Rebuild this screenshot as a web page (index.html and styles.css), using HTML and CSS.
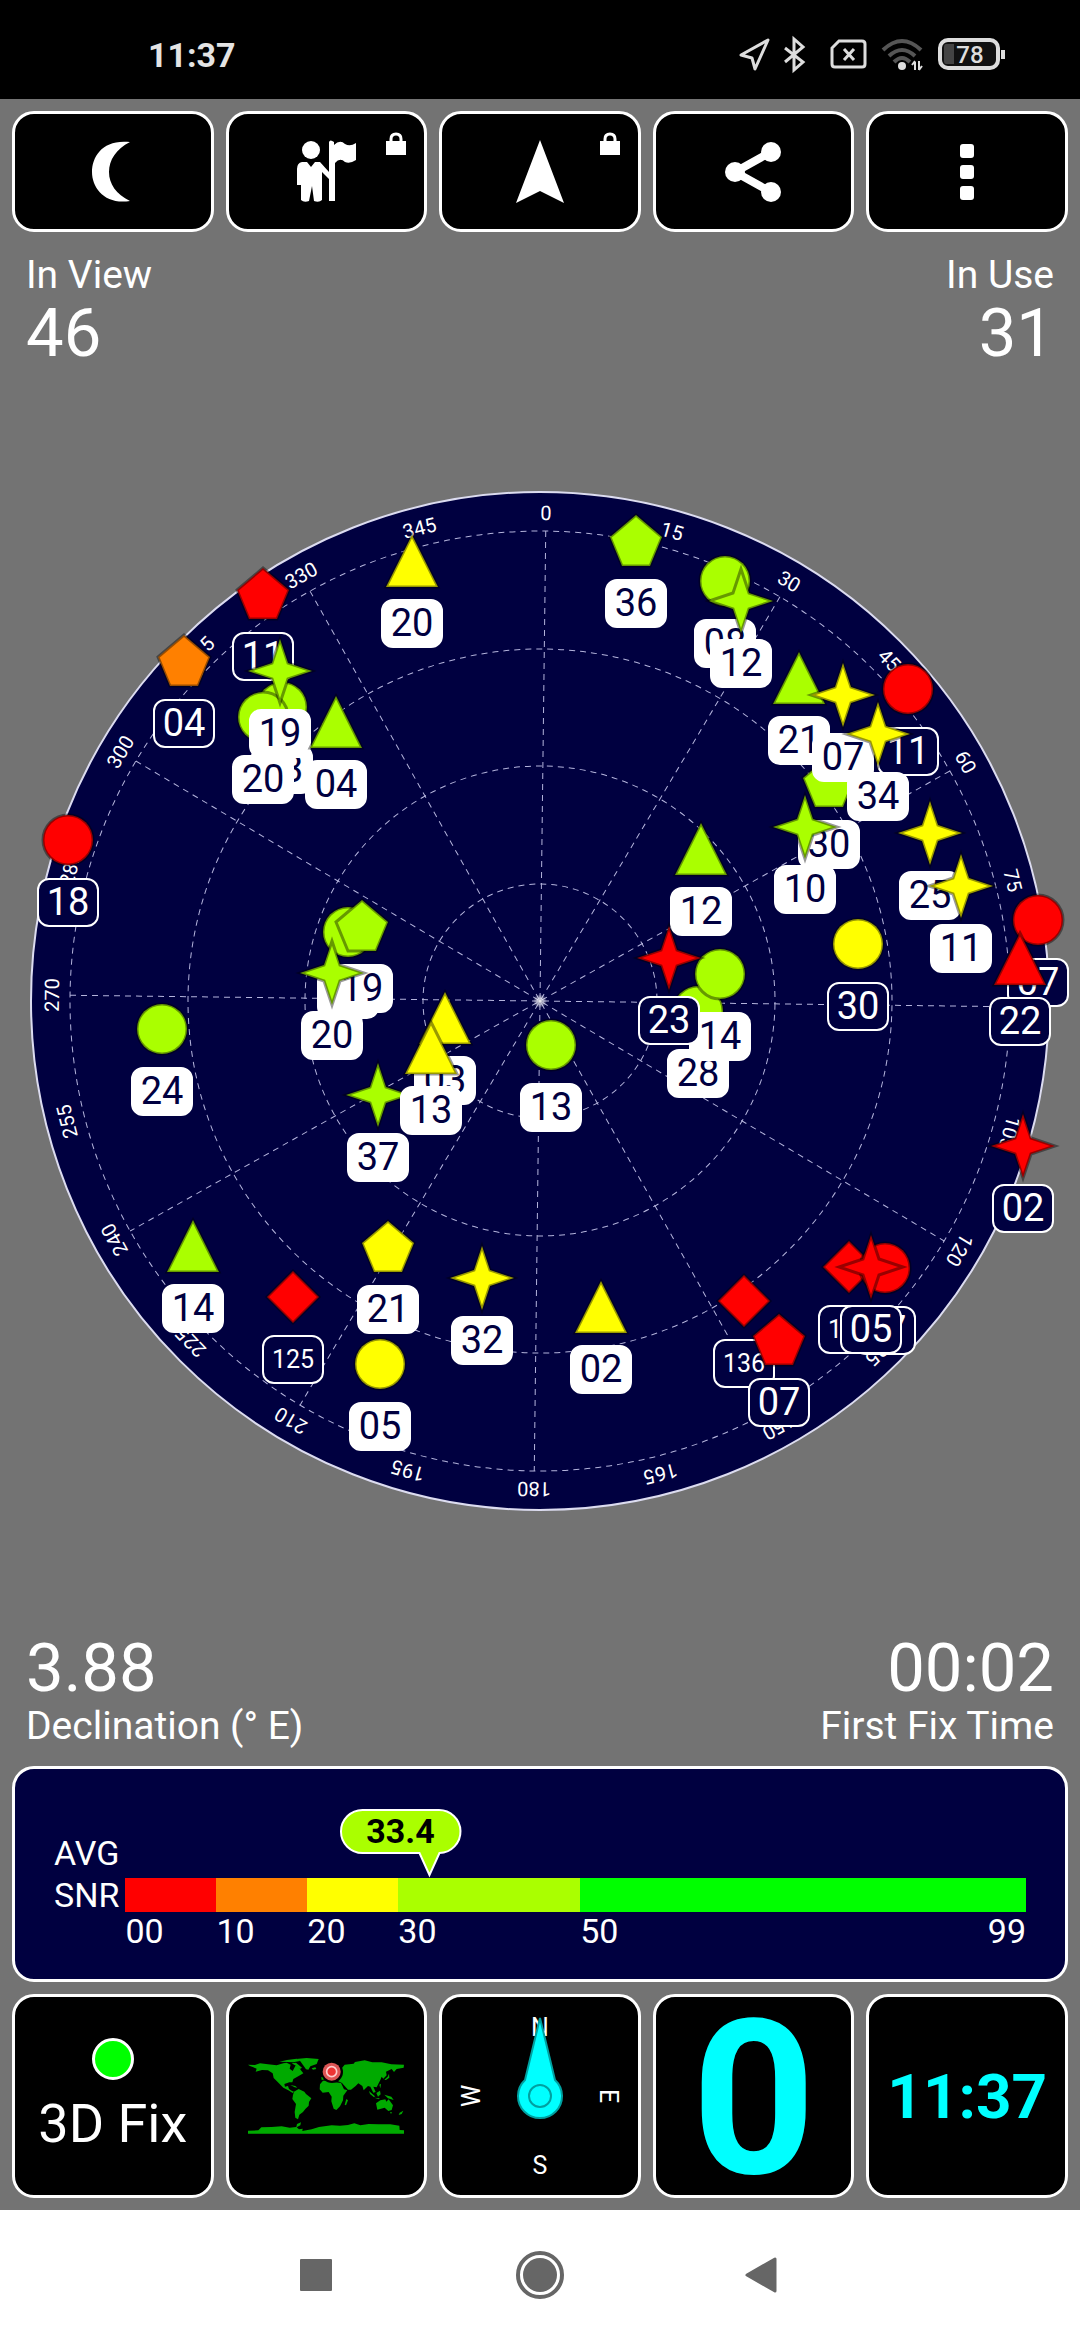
FILE: index.html
```html
<!DOCTYPE html>
<html lang="en">
<head>
  <meta charset="utf-8">
  <meta name="viewport" content="width=device-width, initial-scale=1">
  <title>GPS Sky View</title>
  <link rel="stylesheet" href="styles.css">
</head>
<body>
  <!-- Status bar -->
  <header class="status-bar">
    <span class="status-time">11:37</span>
    <svg class="status-icons" viewBox="0 0 270 40" role="img" aria-label="Location, bluetooth, no SIM, wifi, battery">
      <path d="M3 20 30 5 17 34 14 23Z" fill="none" stroke="#ddd" stroke-width="3" stroke-linejoin="round"/>
      <path d="M47 13 65 27 56 35V4L65 12 47 27" fill="none" stroke="#ddd" stroke-width="3"/>
      <path d="M101 6H124Q127 6 127 9V29Q127 32 124 32H97Q94 32 94 29V13Z" fill="none" stroke="#ddd" stroke-width="3"/>
      <path d="M106 14 116 25M116 14 106 25" stroke="#ddd" stroke-width="3"/>
      <g fill="none" stroke="#555" stroke-width="4">
        <path d="M145 15Q164 -3 183 15"/>
        <path d="M151 21Q164 9 177 21"/>
        <path d="M156 27Q164 19 172 27"/>
      </g>
      <circle cx="164" cy="31" r="4" fill="#ddd"/>
      <path d="M177 27V35M174 30 177 26M181 26V35M184 31 181 35" stroke="#ddd" stroke-width="2"/>
      <rect x="202" y="5" width="58" height="28" rx="8" fill="#111" stroke="#ddd" stroke-width="4"/>
      <path d="M208 9H216V29H208Q206 29 206 26V12Q206 9 208 9Z" fill="#444"/>
      <path d="M265 15V24" stroke="#ddd" stroke-width="4"/>
      <text class="battery-text" x="232" y="28">78</text>
    </svg>
  </header>

  <main class="app">
    <!-- Toolbar -->
    <nav class="tiles toolbar">
      <button class="tile" aria-label="Night mode">
        <svg width="64" height="64" viewBox="0 0 64 64"><path d="M49 2C22 -1 11 16 11 32S24 65 49 61C35 54 28 44 28 32S35 9 49 2Z"/></svg>
      </button>
      <button class="tile" aria-label="Guide">
        <svg width="64" height="64" viewBox="0 0 64 64">
          <circle cx="17" cy="10" r="9"/>
          <path d="M8 22H13L17 27 21 22H26L35 32V2Q36 -1 40 2V5Q46 -1 51 4 56 7 62 3V20Q56 24 51 22 46 17 41 23V61H35V39L28 32V60Q25 63 20 61L18 46 15 61Q10 63 7 60V45H3V29Q3 23 8 22Z"/>
        </svg>
        <svg class="lock" width="20" height="24" viewBox="0 0 20 24"><path d="M0 9H20V23H0Z"/><path d="M5 10V7Q5 2 10 2T15 7V10" fill="none" stroke="#fff" stroke-width="3"/></svg>
      </button>
      <button class="tile" aria-label="Navigation">
        <svg width="64" height="64" viewBox="0 0 64 64"><path d="M32 0 56 63 32 51 8 63Z"/></svg>
        <svg class="lock" width="20" height="24" viewBox="0 0 20 24"><path d="M0 9H20V23H0Z"/><path d="M5 10V7Q5 2 10 2T15 7V10" fill="none" stroke="#fff" stroke-width="3"/></svg>
      </button>
      <button class="tile" aria-label="Share">
        <svg width="64" height="64" viewBox="0 0 64 64"><path d="M49 12 13 32 49 52" fill="none" stroke="#fff" stroke-width="8"/><circle cx="13" cy="32" r="10"/><circle cx="49" cy="12" r="10"/><circle cx="49" cy="52" r="10"/></svg>
      </button>
      <button class="tile" aria-label="More">
        <svg width="64" height="64" viewBox="0 0 64 64"><rect x="25" y="4" width="14" height="14" rx="3"/><rect x="25" y="25" width="14" height="14" rx="3"/><rect x="25" y="46" width="14" height="14" rx="3"/></svg>
      </button>
    </nav>

    <section class="sky">
      <div class="readouts">
        <div class="readout">
          <span class="label">In View</span>
          <span class="value">46</span>
        </div>
        <div class="readout right">
          <span class="label">In Use</span>
          <span class="value">31</span>
        </div>
      </div>

      <!-- Sky plot -->
      <svg class="sky-plot" viewBox="0 0 1080 1080" role="img" aria-label="Satellite positions">
        <defs>
          <circle id="circle" r="25"/>
          <path id="triangle" d="M0 -26 26 26H-26Z"/>
          <path id="pentagon" d="M0 -26 26 -4 14 25H-14L-26 -4Z"/>
          <path id="star" d="M0 -32 8 -8 32 0 8 8 0 32 -8 8 -32 0 -8 -8Z"/>
          <path id="diamond" d="M0 -26 26 0 0 26 -26 0Z"/>
          <rect id="tag" x="-30" y="39" width="60" height="47" rx="11"/>
          <radialGradient id="zenith"><stop offset="0" stop-color="#fff"/><stop offset="1" stop-color="#fff" stop-opacity="0"/></radialGradient>
        </defs>

        <circle class="horizon" cx="540" cy="540" r="509"/>
        <g transform="translate(540 540) rotate(0.7)">
          <g class="grid-lines">
            <circle r="470"/>
            <circle r="352"/>
            <circle r="235"/>
            <circle r="117"/>
            <path d="M0 -470V470M-470 0H470"/>
            <path d="M0 -470V470M-470 0H470" transform="rotate(30)"/>
            <path d="M0 -470V470M-470 0H470" transform="rotate(60)"/>
          </g>
          <g class="azimuth">
            <text y="-481">0</text>
            <text y="-481" transform="rotate(15)">15</text>
            <text y="-481" transform="rotate(30)">30</text>
            <text y="-481" transform="rotate(45)">45</text>
            <text y="-481" transform="rotate(60)">60</text>
            <text y="-481" transform="rotate(75)">75</text>
            <text y="-481" transform="rotate(105)">105</text>
            <text y="-481" transform="rotate(120)">120</text>
            <text y="-481" transform="rotate(135)">135</text>
            <text y="-481" transform="rotate(150)">150</text>
            <text y="-481" transform="rotate(165)">165</text>
            <text y="-481" transform="rotate(180)">180</text>
            <text y="-481" transform="rotate(195)">195</text>
            <text y="-481" transform="rotate(210)">210</text>
            <text y="-481" transform="rotate(225)">225</text>
            <text y="-481" transform="rotate(240)">240</text>
            <text y="-481" transform="rotate(255)">255</text>
            <text y="-481" transform="rotate(270)">270</text>
            <text y="-481" transform="rotate(285)">285</text>
            <text y="-481" transform="rotate(300)">300</text>
            <text y="-481" transform="rotate(315)">315</text>
            <text y="-481" transform="rotate(330)">330</text>
            <text y="-481" transform="rotate(345)">345</text>
          </g>
        </g>
        <circle cx="540" cy="540" r="7" fill="url(#zenith)"/>

        <!-- north west -->
        <g class="sat red" transform="translate(263 133)"><use href="#pentagon"/><use class="tag" href="#tag"/><text y="75">11</text></g>
        <g class="sat orange" transform="translate(184 200)"><use href="#pentagon"/><use class="tag" href="#tag"/><text y="75">04</text></g>
        <g class="sat lime used" transform="translate(282 246)"><use href="#circle"/><use class="tag" href="#tag"/><text y="75">03</text></g>
        <g class="sat lime used" transform="translate(263 256)"><use href="#circle"/><use class="tag" href="#tag"/><text y="75">20</text></g>
        <g class="sat lime used" transform="translate(280 210)"><use href="#star"/><use class="tag" href="#tag"/><text y="75">19</text></g>
        <g class="sat lime used" transform="translate(336 261)"><use href="#triangle"/><use class="tag" href="#tag"/><text y="75">04</text></g>
        <g class="sat red" transform="translate(68 379)"><use href="#circle"/><use class="tag" href="#tag"/><text y="75">18</text></g>
        <g class="sat yellow used" transform="translate(412 100)"><use href="#triangle"/><use class="tag" href="#tag"/><text y="75">20</text></g>
        <g class="sat lime used" transform="translate(348 471)"><use href="#circle"/><use class="tag" href="#tag"/></g>
        <g class="sat lime used" transform="translate(362 465)"><use href="#pentagon"/><use class="tag" href="#tag"/><text y="75">19</text></g>
        <g class="sat lime used" transform="translate(332 512)"><use href="#star"/><use class="tag" href="#tag"/><text y="75">20</text></g>

        <!-- south west -->
        <g class="sat lime used" transform="translate(162 568)"><use href="#circle"/><use class="tag" href="#tag"/><text y="75">24</text></g>
        <g class="sat lime used" transform="translate(378 634)"><use href="#star"/><use class="tag" href="#tag"/><text y="75">37</text></g>
        <g class="sat lime used" transform="translate(193 785)"><use href="#triangle"/><use class="tag" href="#tag"/><text y="75">14</text></g>
        <g class="sat red" transform="translate(293 836)"><use href="#diamond"/><use class="tag" href="#tag"/><text class="small" y="71">125</text></g>
        <g class="sat yellow used" transform="translate(388 786)"><use href="#pentagon"/><use class="tag" href="#tag"/><text y="75">21</text></g>
        <g class="sat yellow used" transform="translate(380 903)"><use href="#circle"/><use class="tag" href="#tag"/><text y="75">05</text></g>
        <g class="sat yellow used" transform="translate(482 817)"><use href="#star"/><use class="tag" href="#tag"/><text y="75">32</text></g>
        <g class="sat yellow used" transform="translate(445 557)"><use href="#triangle"/><use class="tag" href="#tag"/><text y="75">03</text></g>
        <g class="sat yellow used" transform="translate(431 587)"><use href="#triangle"/><use class="tag" href="#tag"/><text y="75">13</text></g>

        <!-- north east -->
        <g class="sat lime used" transform="translate(636 80)"><use href="#pentagon"/><use class="tag" href="#tag"/><text y="75">36</text></g>
        <g class="sat lime used" transform="translate(725 120)"><use href="#circle"/><use class="tag" href="#tag"/><text y="75">08</text></g>
        <g class="sat lime used" transform="translate(741 140)"><use href="#star"/><use class="tag" href="#tag"/><text y="75">12</text></g>
        <g class="sat lime used" transform="translate(799 217)"><use href="#triangle"/><use class="tag" href="#tag"/><text y="75">21</text></g>
        <g class="sat red" transform="translate(908 228)"><use href="#circle"/><use class="tag" href="#tag"/><text y="75">11</text></g>
        <g class="sat lime used" transform="translate(829 321)"><use href="#pentagon"/><use class="tag" href="#tag"/><text y="75">30</text></g>
        <g class="sat yellow used" transform="translate(843 234)"><use href="#star"/><use class="tag" href="#tag"/><text y="75">07</text></g>
        <g class="sat yellow used" transform="translate(878 273)"><use href="#star"/><use class="tag" href="#tag"/><text y="75">34</text></g>
        <g class="sat lime used" transform="translate(805 366)"><use href="#star"/><use class="tag" href="#tag"/><text y="75">10</text></g>
        <g class="sat yellow used" transform="translate(930 372)"><use href="#star"/><use class="tag" href="#tag"/><text y="75">25</text></g>
        <g class="sat yellow used" transform="translate(961 425)"><use href="#star"/><use class="tag" href="#tag"/><text y="75">11</text></g>
        <g class="sat lime used" transform="translate(701 388)"><use href="#triangle"/><use class="tag" href="#tag"/><text y="75">12</text></g>
        <g class="sat yellow" transform="translate(858 483)"><use href="#circle"/><use class="tag" href="#tag"/><text y="75">30</text></g>
        <g class="sat red" transform="translate(1038 459)"><use href="#circle"/><use class="tag" href="#tag"/><text y="75">07</text></g>
        <g class="sat red" transform="translate(1020 498)"><use href="#triangle"/><use class="tag" href="#tag"/><text y="75">22</text></g>

        <!-- south east -->
        <g class="sat lime used" transform="translate(698 550)"><use href="#circle"/><use class="tag" href="#tag"/><text y="75">28</text></g>
        <g class="sat lime used" transform="translate(720 513)"><use href="#circle"/><use class="tag" href="#tag"/><text y="75">14</text></g>
        <g class="sat red" transform="translate(669 497)"><use href="#star"/><use class="tag" href="#tag"/><text y="75">23</text></g>
        <g class="sat lime used" transform="translate(551 584)"><use href="#circle"/><use class="tag" href="#tag"/><text y="75">13</text></g>
        <g class="sat red" transform="translate(1023 685)"><use href="#star"/><use class="tag" href="#tag"/><text y="75">02</text></g>
        <g class="sat red" transform="translate(849 806)"><use href="#diamond"/><use class="tag" href="#tag"/><text class="small" y="71">123</text></g>
        <g class="sat red" transform="translate(885 807)"><use href="#circle"/><use class="tag" href="#tag"/><text y="75">27</text></g>
        <g class="sat red" transform="translate(871 806)"><use href="#star"/><use class="tag" href="#tag"/><text y="75">05</text></g>
        <g class="sat red" transform="translate(744 840)"><use href="#diamond"/><use class="tag" href="#tag"/><text class="small" y="71">136</text></g>
        <g class="sat red" transform="translate(779 879)"><use href="#pentagon"/><use class="tag" href="#tag"/><text y="75">07</text></g>
        <g class="sat yellow used" transform="translate(601 846)"><use href="#triangle"/><use class="tag" href="#tag"/><text y="75">02</text></g>
      </svg>

      <div class="readouts">
        <div class="readout">
          <span class="value">3.88</span>
          <span class="label">Declination (° E)</span>
        </div>
        <div class="readout right">
          <span class="value">00:02</span>
          <span class="label">First Fix Time</span>
        </div>
      </div>
    </section>

    <!-- Average signal to noise ratio -->
    <section class="snr">
      <div class="snr-name">AVG</div>
      <div class="snr-name">SNR</div>
      <div class="snr-bar">
        <span class="red"></span>
        <span class="orange"></span>
        <span class="yellow"></span>
        <span class="lime"></span>
        <span class="green"></span>
        <svg class="snr-bubble" style="left: 33.7%" width="124" height="70" viewBox="0 0 124 70">
          <path d="M24 2H100A21 21 0 0 1 101 45L91 67 81 45H24A21 21 0 0 1 24 2Z"/>
          <text x="62" y="35">33.4</text>
        </svg>
      </div>
      <div class="snr-scale">
        <span>00</span>
        <span>10</span>
        <span>20</span>
        <span>30</span>
        <span class="scale-end"><span>50</span><span>99</span></span>
      </div>
    </section>

    <!-- Widgets -->
    <div class="tiles widgets">
      <button class="tile fix">
        <span class="fix-dot"></span>
        3D Fix
      </button>
      <button class="tile" aria-label="World map">
        <svg width="156" height="76" viewBox="24 28 468 228">
          <g fill="#0a0">
            <path d="M24 48 45 49 60 44 84 47 110 50 130 44 140 42 152 48 149 60 158 67 166 52 174 53 184 66 190 74 176 82 160 91 157 101 148 101 133 106 135 114 144 112 147 121 155 126 162 129 158 133 145 125 130 117 113 100 101 88 98 74 84 65 66 64 47 69 50 60 40 56 30 52Z"/>
            <path d="M118 39 141 34 170 30 180 37 160 41 145 40ZM155 44 168 42 186 57 180 61 165 50Z"/>
            <path d="M168 31 200 28 236 31 230 46 211 53 205 63 198 62 189 49 181 38Z"/>
            <path d="M215 59 226 56 229 61 219 63Z"/>
            <path d="M151 109 166 112 172 117 164 116Z"/>
            <path d="M162 129 176 121 193 129 198 136 214 149 207 160 206 171 196 181 189 190 178 198 174 212 166 207 164 190 168 166 157 151 159 139Z"/>
            <path d="M240 107 249 96 270 96 284 101 303 103 312 122 322 125 310 141 309 155 300 173 289 184 281 180 274 158 275 144 266 130 248 132 239 122Z"/>
            <path d="M319 151 324 155 318 170 314 168Z"/>
            <path d="M245 94 244 85 257 84 267 73 283 70 304 60 314 48 341 45 345 40 374 35 397 41 425 41 454 47 492 48 491 57 470 61 462 70 455 61 438 69 440 80 430 90 425 84 421 94 416 104 410 116 400 114 407 130 400 132 391 114 384 112 371 125 367 112 355 104 347 112 333 123 324 123 306 103 295 98 287 91 279 96 268 88 257 91Z"/>
            <path d="M387 127 405 143 402 146 390 136ZM409 133 420 126 422 137 414 144ZM403 147 419 149 417 152ZM433 138 454 144 461 154 444 149ZM418 108 423 105 421 119ZM433 93 443 84 447 75 448 87 438 94Z"/>
            <path d="M408 164 421 155 436 152 439 159 446 152 459 170 455 184 445 187 434 177 412 183ZM450 190 456 191 453 196ZM479 192 490 186 485 196 476 199Z"/>
            <path d="M24 246 55 245 64 236 95 235 125 233 149 237 169 235 171 226 183 221 181 230 170 236 177 242 188 240 187 247 215 242 237 235 275 230 300 231 324 229 343 224 361 230 386 226 416 227 451 227 478 231 479 244 492 245V255H24Z"/>
          </g>
          <circle cx="276" cy="70" r="33"/>
          <circle cx="275" cy="69" r="27" fill="#d55"/>
          <circle cx="275" cy="69" r="15" fill="#e33" stroke="#fcc" stroke-width="5"/>
        </svg>
      </button>
      <button class="tile" aria-label="Compass">
        <svg class="compass" width="190" height="190" viewBox="-95 -95 190 190">
          <text y="-60">N</text>
          <text y="-60" transform="rotate(90)">E</text>
          <text y="78">S</text>
          <text y="-60" transform="rotate(-90)">W</text>
          <path d="M0 -78 15 -16A22 22 0 1 1 -15 -16Z"/>
          <circle r="11"/>
        </svg>
      </button>
      <button class="tile speed">0</button>
      <button class="tile clock">11:37</button>
    </div>
  </main>

  <!-- System navigation -->
  <nav class="system-nav">
    <button aria-label="Recent apps"><svg width="48" height="48" viewBox="0 0 48 48"><rect x="8" y="8" width="32" height="32" rx="1"/></svg></button>
    <button aria-label="Home"><svg width="48" height="48" viewBox="0 0 48 48"><circle cx="24" cy="24" r="22" fill="none" stroke="#666" stroke-width="4"/><circle cx="24" cy="24" r="17"/></svg></button>
    <button aria-label="Back"><svg width="48" height="48" viewBox="0 0 48 48"><path d="M35 8V40L7 24Z" stroke="#666" stroke-width="3" stroke-linejoin="round"/></svg></button>
  </nav>
</body>
</html>
```
FILE: styles.css
```css
* {
  box-sizing: border-box;
}

body {
  margin: 0;
  min-height: 100vh;
  display: flex;
  flex-direction: column;
  background-color: #737373;
  color: #fff;
  font-family: Roboto, 'Liberation Sans', sans-serif;
  font-size: 38px;
}

button {
  margin: 0;
  padding: 0;
  border: none;
  background: none;
  color: inherit;
  font: inherit;
  cursor: pointer;
}

svg {
  display: block;
}

/* Status bar */
.status-bar {
  height: 99px;
  padding: 10px 72px 0 148px;
  display: flex;
  justify-content: space-between;
  align-items: center;
  background-color: #000;
}

.status-time {
  font-size: 34px;
  font-weight: bold;
  color: #e4e4e4;
}

.status-icons {
  width: 270px;
  height: 40px;
}

.battery-text {
  font-size: 24px;
  font-weight: 500;
  fill: #ddd;
  text-anchor: middle;
}

.app {
  flex: 1;
  display: flex;
  flex-direction: column;
  gap: 12px;
  padding: 12px;
}

/* Tiles */
.tiles {
  display: grid;
  grid-template-columns: repeat(5, 1fr);
  gap: 12px;
}

.tile {
  position: relative;
  display: flex;
  justify-content: center;
  align-items: center;
  border: 3px solid #fff;
  border-radius: 22px;
  background-color: #000;
}

.toolbar .tile {
  height: 121px;
}

.toolbar svg {
  fill: #fff;
}

.lock {
  position: absolute;
  top: 18px;
  right: 18px;
}

.widgets .tile {
  height: 204px;
}

/* Sky view */
.sky {
  flex: 1;
  display: flex;
  flex-direction: column;
  justify-content: space-between;
  padding: 9px 0 6px;
}

.readouts {
  display: flex;
  justify-content: space-between;
  padding: 0 14px;
}

.readout {
  display: flex;
  flex-direction: column;
}

.readout.right {
  text-align: right;
}

.label {
  font-size: 39px;
  line-height: 44px;
}

.value {
  font-size: 67px;
  line-height: 72px;
}

.sky-plot {
  align-self: stretch;
  margin: 0 -12px;
}

.horizon {
  fill: #000040;
  stroke: #dcdcf0;
  stroke-width: 2;
}

.grid-lines {
  fill: none;
  stroke: #b4b4dc;
  stroke-width: 1;
  stroke-dasharray: 6 5;
}

.azimuth {
  fill: #fff;
  font-size: 20px;
  text-anchor: middle;
}

.sat {
  stroke: rgba(0, 0, 0, 0.4);
  stroke-width: 3;
}

.sat.red { fill: #f00; }
.sat.orange { fill: #ff8000; }
.sat.yellow { fill: #ff0; }
.sat.lime { fill: #af0; }

.sat .tag {
  fill: #000040;
  stroke: #fff;
  stroke-width: 2;
}

.sat text {
  fill: #fff;
  stroke: none;
  font-size: 38px;
  text-anchor: middle;
}

.sat .small {
  font-size: 25px;
}

.sat.used .tag {
  fill: #fff;
}

.sat.used text {
  fill: #000040;
}

/* SNR panel */
.snr {
  display: grid;
  grid-template-columns: auto 1fr;
  column-gap: 6px;
  align-items: center;
  padding: 63px 39px 33px 39px;
  border: 3px solid #fff;
  border-radius: 22px;
  background-color: #000040;
  font-size: 34px;
}

.snr-name {
  grid-column: 1;
  line-height: 42px;
}

.snr-bar,
.snr-scale {
  grid-column: 2;
  display: grid;
  grid-template-columns: 10fr 10fr 10fr 20fr 49fr;
}

.snr-bar {
  grid-row: 2;
  position: relative;
  height: 34px;
}

.snr-bar .red { background-color: #f00; }
.snr-bar .orange { background-color: #ff8000; }
.snr-bar .yellow { background-color: #ff0; }
.snr-bar .lime { background-color: #af0; }
.snr-bar .green { background-color: #0f0; }

.snr-scale {
  line-height: 30px;
}

.scale-end {
  display: flex;
  justify-content: space-between;
}

.snr-bubble {
  position: absolute;
  bottom: 100%;
  transform: translateX(-73%);
  fill: #af0;
  stroke: #fff;
  stroke-width: 2;
}

.snr-bubble text {
  fill: #000;
  stroke: none;
  font-size: 34px;
  font-weight: bold;
  text-anchor: middle;
}

/* Widgets */
.widgets .fix {
  flex-direction: column;
  gap: 12px;
  font-size: 54px;
}

.fix-dot {
  width: 42px;
  height: 42px;
  border: 3px solid #fff;
  border-radius: 50%;
  background-color: #0f0;
}

.compass text {
  fill: #fff;
  font-size: 25px;
  text-anchor: middle;
}

.compass path,
.compass circle {
  fill: #0ff;
  stroke: #00a0a0;
  stroke-width: 2;
}

.speed,
.clock {
  color: #0ff;
  font-weight: bold;
}

.speed {
  padding-top: 8px;
  font-size: 216px;
  line-height: 190px;
}

.clock {
  font-size: 62px;
}

/* System navigation */
.system-nav {
  height: 130px;
  display: flex;
  justify-content: center;
  align-items: center;
  gap: 176px;
  background-color: #fff;
}

.system-nav svg {
  fill: #666;
}
```
